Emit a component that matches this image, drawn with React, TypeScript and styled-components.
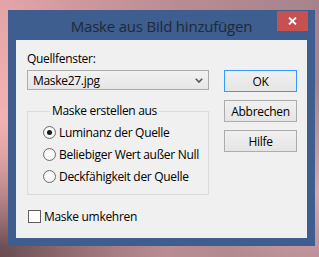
import styled, { createGlobalStyle } from 'styled-components';

const Global = createGlobalStyle`
  html, body { margin:0; padding:0; }
  body {
    width:319px; height:257px; overflow:hidden;
    font-family:"Open Sans", "Noto Sans", sans-serif;
    background:
      radial-gradient(circle at 0% 45%, #f2b3b3 0, rgba(242,179,179,0) 130px),
      radial-gradient(circle at 100% 75%, #dba7ab 0, rgba(219,167,171,0) 110px),
      radial-gradient(circle at 0% 100%, #654b51 0, rgba(101,75,81,0) 170px),
      linear-gradient(to right, #e0a2a6 0%, #b98c94 55%, #a6838c 100%);
  }
`;

const Page = styled.div`padding:10px 4px 0 8px;`;
const Window = styled.div`width:307px; height:236px; background:#3d5e8e; display:flex; flex-direction:column;`;
const TitleBar = styled.div`
  height:30px; display:grid; grid-template-columns:1fr auto 1fr; align-items:start;
  padding:0 8px;
`;
const Title = styled.div`
  grid-column:2; padding-top:6px; font-size:15px; line-height:20px; color:#1f2938; white-space:nowrap;
  letter-spacing:-0.2px;
`;
const CloseBtn = styled.div`
  grid-column:3; justify-self:end; margin-top:1px; width:31px; height:20px; background:#c75050;
  display:flex; align-items:center; justify-content:center; margin-right:-1px;
`;
const Client = styled.div`
  flex:1; margin:0 8px 8px; background:#f0f0f0; padding:11px 10px 0 11px;
  display:grid; grid-template-columns:182px 73px; column-gap:15px; align-content:start;
  font-size:12px; letter-spacing:-0.3px; color:#000;
`;
const LeftCol = styled.div`display:flex; flex-direction:column;`;
const Label = styled.div`line-height:16px; height:16px; margin-bottom:3px;`;
const Select = styled.div`
  height:20px; box-sizing:border-box; border:1px solid #acacac; padding:0 0 0 5px;
  background:linear-gradient(#f2f2f2, #e6e6e6); display:flex; align-items:center; justify-content:space-between;
  svg { margin-right:5px; }
`;
const Group = styled.fieldset`
  margin:14px 0 0; min-width:0; border:1px solid #dcdcdc; padding:3px 0 6px 15px; height:91px; box-sizing:border-box;
`;
const Legend = styled.legend`padding:0 2px; margin-left:7px; line-height:14px;`;
const OptionRow = styled.div`height:22px; display:flex; align-items:center; gap:3px; white-space:nowrap;`;
const Radio = styled.span<{ $on?: boolean }>`
  width:13px; height:13px; box-sizing:border-box; border-radius:50%; border:1px solid #6e6e6e;
  background:radial-gradient(circle, #ffffff 0, #f4f4f4 60%, #e0e0e0 100%);
  display:flex; align-items:center; justify-content:center; flex:none;
  &::after { content:''; width:5px; height:5px; border-radius:50%; background:#1a1a1a; display:${({ $on }) => ($on ? 'block' : 'none')}; }
`;
const CheckRow = styled.div`margin-top:13px; height:16px; display:flex; align-items:center; gap:3px; padding-left:1px;`;
const Check = styled.span`width:13px; height:13px; box-sizing:border-box; border:1px solid #5e5e5e; background:#fff; flex:none;`;
const RightCol = styled.div`padding-top:19px; display:flex; flex-direction:column; gap:8px;`;
const Button = styled.div<{ $default?: boolean }>`
  height:22px; box-sizing:border-box; border:1px solid ${({ $default }) => ($default ? '#3399ff' : '#acacac')};
  background:linear-gradient(#f0f0f0, #e5e5e5); display:flex; align-items:center; justify-content:center;
`;

const options = [
  { label: 'Luminanz der Quelle', on: true },
  { label: 'Beliebiger Wert außer Null' },
  { label: 'Deckfähigkeit der Quelle' },
];

export default function App() {
  return (
    <Page>
      <Global />
      <Window>
        <TitleBar>
          <Title>Maske aus Bild hinzufügen</Title>
          <CloseBtn>
            <svg width="9" height="8" viewBox="0 0 9 8">
              <path d="M1 0.5 L8 7.5 M8 0.5 L1 7.5" stroke="#fff" strokeWidth="1.8" />
            </svg>
          </CloseBtn>
        </TitleBar>
        <Client>
          <LeftCol>
            <Label>Quellfenster:</Label>
            <Select>
              <span>Maske27.jpg</span>
              <svg width="8" height="5" viewBox="0 0 8 5">
                <path d="M0.8 0.8 L4 4 L7.2 0.8" stroke="#555" strokeWidth="1.6" fill="none" />
              </svg>
            </Select>
            <Group>
              <Legend>Maske erstellen aus</Legend>
              {options.map((o) => (
                <OptionRow key={o.label}>
                  <Radio $on={o.on} />
                  {o.label}
                </OptionRow>
              ))}
            </Group>
            <CheckRow>
              <Check />
              Maske umkehren
            </CheckRow>
          </LeftCol>
          <RightCol>
            <Button $default>OK</Button>
            <Button>Abbrechen</Button>
            <Button>Hilfe</Button>
          </RightCol>
        </Client>
      </Window>
    </Page>
  );
}
